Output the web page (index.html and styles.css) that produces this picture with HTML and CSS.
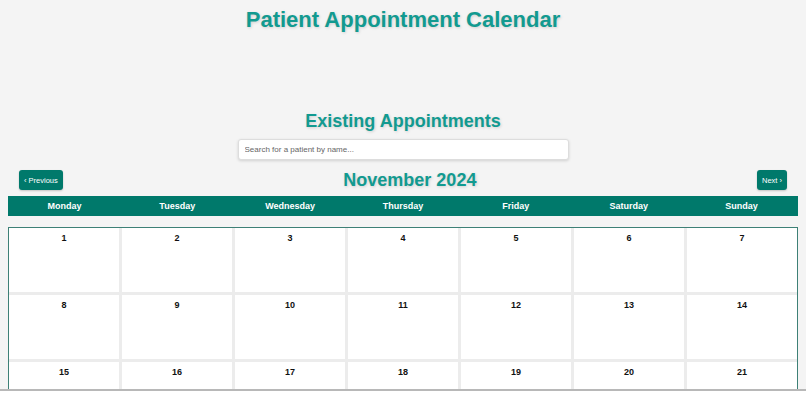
FILE: index.html
```html
<!DOCTYPE html>
<html lang="en">
<head>
    <meta charset="UTF-8">
    <meta name="viewport" content="width=device-width, initial-scale=1.0">
    <title>Patient Appointment Calendar</title>
    <link rel="stylesheet" href="styles.css">
</head>
<body>
    <div class="page">
        <h1 class="page-title">Patient Appointment Calendar</h1>

        <div class="appointments">
            <h2 class="section-title">Existing Appointments</h2>
            <input type="text" class="search-box" placeholder="Search for a patient by name...">

            <div class="calendar-nav">
                <button class="nav-btn">&lsaquo; Previous</button>
                <div class="month-title">November 2024</div>
                <button class="nav-btn">Next &rsaquo;</button>
            </div>

            <div class="weekdays">
                <div>Monday</div>
                <div>Tuesday</div>
                <div>Wednesday</div>
                <div>Thursday</div>
                <div>Friday</div>
                <div>Saturday</div>
                <div>Sunday</div>
            </div>

            <div class="calendar-grid">
                <div class="day">1</div>
                <div class="day">2</div>
                <div class="day">3</div>
                <div class="day">4</div>
                <div class="day">5</div>
                <div class="day">6</div>
                <div class="day">7</div>
                <div class="day">8</div>
                <div class="day">9</div>
                <div class="day">10</div>
                <div class="day">11</div>
                <div class="day">12</div>
                <div class="day">13</div>
                <div class="day">14</div>
                <div class="day">15</div>
                <div class="day">16</div>
                <div class="day">17</div>
                <div class="day">18</div>
                <div class="day">19</div>
                <div class="day">20</div>
                <div class="day">21</div>
            </div>
        </div>
    </div>
</body>
</html>
```

FILE: styles.css
```css
html {
    background: white;
}

body {
    font-family: "Liberation Sans", Arial, sans-serif;
    margin: 0;
    color: #222;
}

.page {
    background-color: #f4f4f4;
    padding: 8px 8px 0;
    height: 391px;
    box-sizing: border-box;
    overflow: hidden;
    border-bottom: 2px solid #b8b8b8;
}

.page-title {
    margin: 0;
    font-size: 22px;
    line-height: 24px;
    text-align: center;
    color: #129a90;
    text-shadow: 1px 1px 3px rgba(0, 0, 0, 0.15);
}

.appointments {
    margin-top: 78px;
    display: flex;
    flex-direction: column;
    align-items: center;
}

.section-title {
    margin: 0;
    font-size: 18px;
    line-height: 22px;
    color: #129a90;
    text-shadow: 1px 1px 3px rgba(0, 0, 0, 0.15);
}

.search-box {
    margin-top: 7px;
    width: 331px;
    height: 21px;
    box-sizing: border-box;
    padding: 0 6px;
    border: 1px solid #ddd;
    border-radius: 3px;
    background: white;
    box-shadow: 0 1px 3px rgba(0, 0, 0, 0.15);
    font-family: "Liberation Sans", Arial, sans-serif;
    font-size: 8px;
    color: #333;
}

.search-box::placeholder {
    color: #666;
}

.calendar-nav {
    margin-top: 10px;
    align-self: stretch;
    display: flex;
    justify-content: space-between;
    align-items: center;
    padding: 0 11px;
    height: 20px;
}

.nav-btn {
    height: 20px;
    padding: 0 5px;
    border: none;
    border-radius: 3px;
    background-color: #00796b;
    color: white;
    font-family: "Liberation Sans", Arial, sans-serif;
    font-size: 7.5px;
    box-shadow: 0 1px 2px rgba(0, 0, 0, 0.2);
    cursor: pointer;
}

.month-title {
    font-size: 18px;
    line-height: 20px;
    font-weight: bold;
    color: #129a90;
    text-shadow: 1px 1px 3px rgba(0, 0, 0, 0.15);
}

.weekdays {
    margin-top: 6px;
    align-self: stretch;
    display: grid;
    grid-template-columns: repeat(7, 1fr);
    height: 20px;
    align-items: center;
    background-color: #00796b;
    color: white;
    font-size: 9px;
    font-weight: bold;
    text-align: center;
}

.calendar-grid {
    margin-top: 11px;
    align-self: stretch;
    display: grid;
    grid-template-columns: repeat(7, 1fr);
    gap: 3px;
    border: 1px solid #3d8076;
    background-color: #ececec;
}

.day {
    background: white;
    height: 64px;
    text-align: center;
    padding-top: 5px;
    box-sizing: border-box;
    font-size: 9px;
    line-height: 11px;
    font-weight: bold;
    color: #111;
}
```
